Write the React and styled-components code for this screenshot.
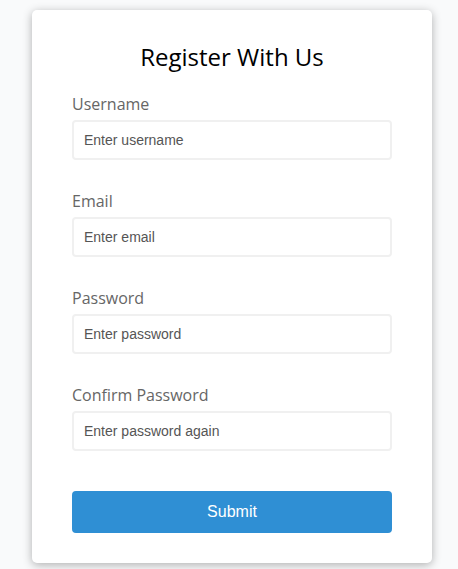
import React from "react";
import styled, { createGlobalStyle } from "styled-components";

const GlobalStyle = createGlobalStyle`
  * {
    box-sizing: border-box;
  }
  body {
    margin: 0;
    background-color: #f9fafb;
    font-family: "Open Sans", sans-serif;
  }
`;

const Page = styled.div`
  display: flex;
  align-items: center;
  justify-content: center;
  min-height: 100vh;
  padding: 4px 0 0 6px;
`;

const Container = styled.div`
  background-color: #fff;
  border-radius: 5px;
  box-shadow: 0 2px 10px rgba(0, 0, 0, 0.3);
  width: 400px;
`;

const Form = styled.form`
  padding: 30px 40px;
`;

const Title = styled.h2`
  text-align: center;
  margin: 0 0 20px;
  font-size: 24px;
  font-weight: 400;
  color: #000;
`;

const Field = styled.div`
  margin-bottom: 10px;
  padding-bottom: 20px;
`;

const Label = styled.label`
  color: #666;
  display: block;
  margin-bottom: 5px;
  font-size: 16px;
`;

const Input = styled.input`
  border: 2px solid #f0f0f0;
  border-radius: 4px;
  display: block;
  width: 100%;
  padding: 10px;
  font-size: 14px;
  font-family: "Liberation Sans", Arial, sans-serif;
  &::placeholder {
    color: #555;
  }
  &:focus {
    outline: 0;
    border-color: #777;
  }
`;

const Button = styled.button`
  cursor: pointer;
  background-color: #2f8fd4;
  border: 2px solid #2f8fd4;
  border-radius: 4px;
  color: #fff;
  display: block;
  font-size: 16px;
  font-family: "Liberation Sans", Arial, sans-serif;
  padding: 10px;
  margin-top: 20px;
  width: 100%;
`;

const fields = [
  { id: "username", label: "Username", type: "text", placeholder: "Enter username" },
  { id: "email", label: "Email", type: "text", placeholder: "Enter email" },
  { id: "password", label: "Password", type: "password", placeholder: "Enter password" },
  { id: "password2", label: "Confirm Password", type: "password", placeholder: "Enter password again" },
];

export default function App() {
  return (
    <>
      <GlobalStyle />
      <Page>
        <Container>
          <Form onSubmit={(e) => e.preventDefault()}>
            <Title>Register With Us</Title>
            {fields.map((f) => (
              <Field key={f.id}>
                <Label htmlFor={f.id}>{f.label}</Label>
                <Input type={f.type} id={f.id} placeholder={f.placeholder} />
              </Field>
            ))}
            <Button type="submit">Submit</Button>
          </Form>
        </Container>
      </Page>
    </>
  );
}
